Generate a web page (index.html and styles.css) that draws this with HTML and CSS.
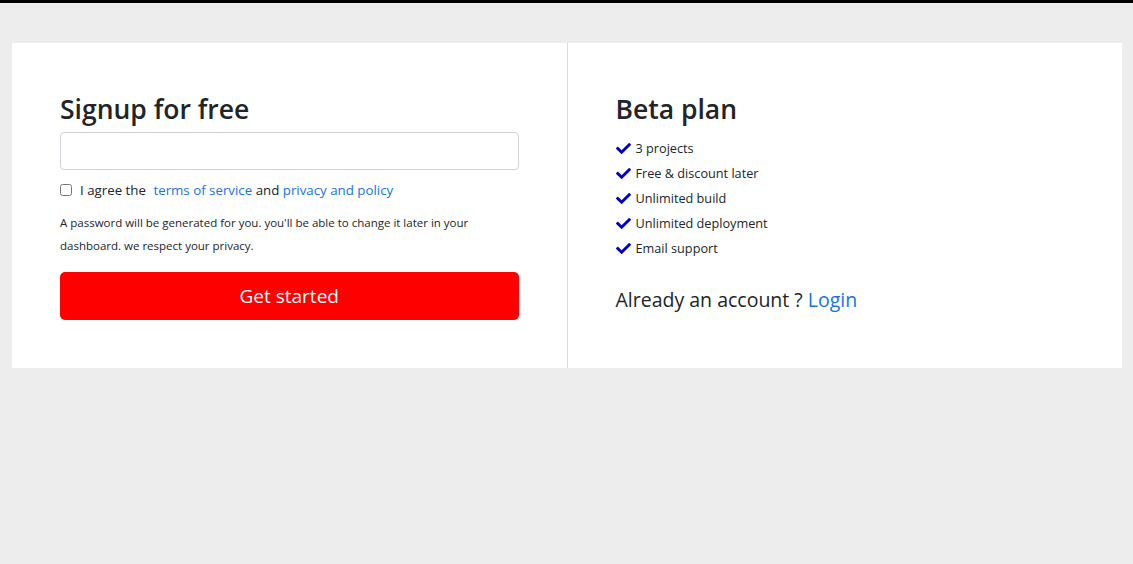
FILE: index.html
```html
<!DOCTYPE html>
<html lang="en">
  <head>
    <meta charset="UTF-8" />
    <meta name="viewport" content="width=device-width, initial-scale=1.0" />
    <title>Signup</title>
    <link rel="stylesheet" href="styles.css">
  </head>
  <body>
    <div class="card">
      <div class="card-col signup">
        <h2 class="card-title">Signup for free</h2>
        <input type="email" class="form-input" />
        <label class="agree">
          <input type="checkbox" />
          <span>I agree the <a href="#" class="terms-link">terms of service</a> and <a href="#">privacy and policy</a></span>
        </label>
        <p class="hint">A password will be generated for you. you'll be able to change it later in your dashboard. we respect your privacy.</p>
        <button class="btn-start">Get started</button>
      </div>
      <div class="card-col plan">
        <h2 class="card-title">Beta plan</h2>
        <ul class="features">
          <li><svg viewBox="0 0 512 512"><path d="M173.9 439.4l-166.4-166.4c-10-10-10-26.2 0-36.2l36.2-36.2c10-10 26.2-10 36.2 0L192 312.7 432.1 72.6c10-10 26.2-10 36.2 0l36.2 36.2c10 10 10 26.2 0 36.2l-294.4 294.4c-10 10-26.2 10-36.2 0z"/></svg>3 projects</li>
          <li><svg viewBox="0 0 512 512"><path d="M173.9 439.4l-166.4-166.4c-10-10-10-26.2 0-36.2l36.2-36.2c10-10 26.2-10 36.2 0L192 312.7 432.1 72.6c10-10 26.2-10 36.2 0l36.2 36.2c10 10 10 26.2 0 36.2l-294.4 294.4c-10 10-26.2 10-36.2 0z"/></svg>Free &amp; discount later</li>
          <li><svg viewBox="0 0 512 512"><path d="M173.9 439.4l-166.4-166.4c-10-10-10-26.2 0-36.2l36.2-36.2c10-10 26.2-10 36.2 0L192 312.7 432.1 72.6c10-10 26.2-10 36.2 0l36.2 36.2c10 10 10 26.2 0 36.2l-294.4 294.4c-10 10-26.2 10-36.2 0z"/></svg>Unlimited build</li>
          <li><svg viewBox="0 0 512 512"><path d="M173.9 439.4l-166.4-166.4c-10-10-10-26.2 0-36.2l36.2-36.2c10-10 26.2-10 36.2 0L192 312.7 432.1 72.6c10-10 26.2-10 36.2 0l36.2 36.2c10 10 10 26.2 0 36.2l-294.4 294.4c-10 10-26.2 10-36.2 0z"/></svg>Unlimited deployment</li>
          <li><svg viewBox="0 0 512 512"><path d="M173.9 439.4l-166.4-166.4c-10-10-10-26.2 0-36.2l36.2-36.2c10-10 26.2-10 36.2 0L192 312.7 432.1 72.6c10-10 26.2-10 36.2 0l36.2 36.2c10 10 10 26.2 0 36.2l-294.4 294.4c-10 10-26.2 10-36.2 0z"/></svg>Email support</li>
        </ul>
        <h5 class="login-line">Already an account ? <a href="#">Login</a></h5>
      </div>
    </div>
  </body>
</html>
```

FILE: styles.css
```css
body {
  font-family: "Open Sans", "Noto Sans", sans-serif;
  margin: 0;
  min-height: 100vh;
  background-color: #ededed;
  border-top: 3px solid #000;
  color: #212529;
}
a {
  color: #1a73e8;
  text-decoration: none;
}
.card {
  display: flex;
  margin: 40px 11px 0 12px;
  background-color: white;
}
.card-col {
  flex: 1 1 0;
  box-sizing: border-box;
  padding: 51px 48px 48px;
}
.signup {
  border-right: 1px solid #dcdcdc;
}
.plan {
  padding-bottom: 0;
}
.card-title {
  font-size: 26.5px;
  font-weight: 600;
  line-height: 1.2;
  margin: 0 0 6px;
}
.form-input {
  display: block;
  width: 100%;
  box-sizing: border-box;
  height: 38px;
  border: 1px solid #ced4da;
  border-radius: 4px;
  margin: 0;
}
.agree {
  display: flex;
  align-items: center;
  font-size: 13.3px;
  margin-top: 11px;
  height: 18px;
}
.agree input {
  margin: 0 8px 0 0;
  width: 12px;
  height: 12px;
}
.terms-link {
  margin-left: 4px;
}
.hint {
  font-size: 11.5px;
  line-height: 23px;
  margin: 12px 0 15px;
}
.btn-start {
  display: block;
  width: 100%;
  height: 48px;
  background-color: #ff0000;
  color: white;
  border: none;
  border-radius: 5px;
  font-family: inherit;
  font-size: 19px;
  cursor: pointer;
}
.features {
  list-style: none;
  padding: 0;
  margin: 10px 0 0;
}
.features li {
  display: flex;
  align-items: center;
  height: 25px;
  font-size: 12.7px;
  font-weight: 500;
}
.features svg {
  width: 15px;
  height: 15px;
  fill: #0000cd;
  margin-right: 5px;
}
.login-line {
  font-size: 19.5px;
  font-weight: 500;
  margin: 25px 0 0;
}
```
